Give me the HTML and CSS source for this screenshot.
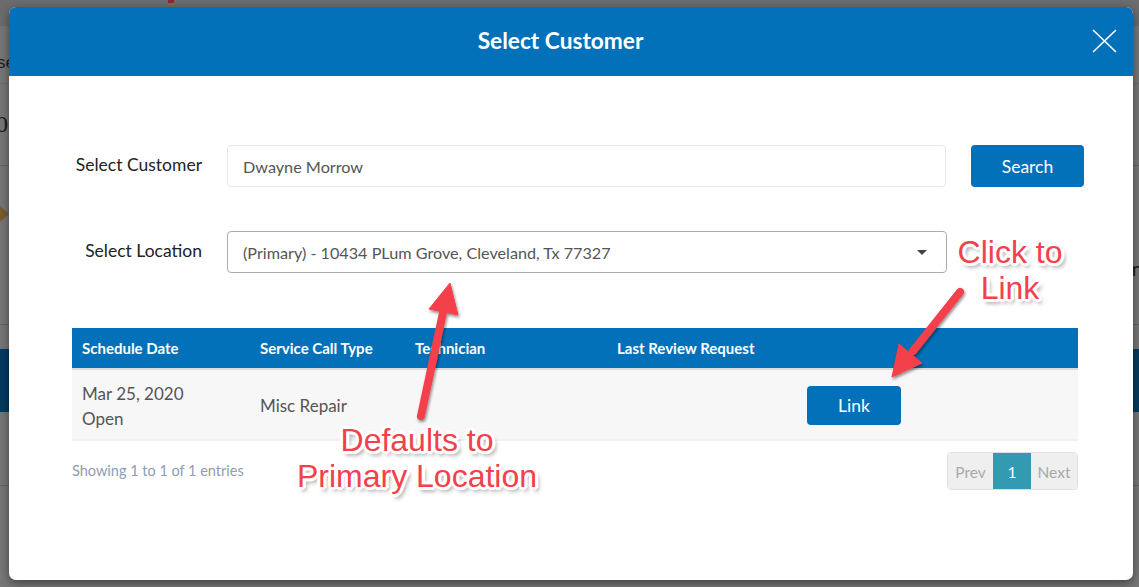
FILE: index.html
```html
<!DOCTYPE html>
<html>
<head>
<meta charset="utf-8">
<title>Select Customer</title>
<link rel="stylesheet" href="styles.css">
</head>
<body>
<div class="page">
  <div class="bg">
    <div class="bg-top"><span class="bg-mark"></span></div>
    <div class="bg-row bg-r1"><span class="bg-text">se</span></div>
    <div class="bg-row bg-r2"><span class="bg-num">0</span></div>
    <div class="bg-row bg-r3"><span class="bg-tri"></span><span class="bg-n">n</span></div>
    <div class="bg-gap"></div>
    <div class="bg-band"></div>
    <div class="bg-row bg-r5"></div>
  </div>

  <div class="modal">
    <div class="modal-header">
      <div class="title">Select Customer</div>
      <svg class="close" width="25" height="24" viewBox="0 0 25 24"><path d="M1 1 L24 23 M24 1 L1 23" stroke="#fff" stroke-width="1.6" fill="none"/></svg>
    </div>
    <div class="modal-body">
      <div class="form">
        <div class="label">Select Customer</div>
        <div class="field input">Dwayne Morrow</div>
        <div class="btn search">Search</div>
        <div class="label">Select Location</div>
        <div class="field select"><span>(Primary) - 10434 PLum Grove, Cleveland, Tx 77327</span><span class="caret"></span></div>
        <div></div>
      </div>

      <table class="grid">
        <colgroup>
          <col style="width:178px"><col style="width:155px"><col style="width:202px"><col style="width:190px"><col>
        </colgroup>
        <thead>
          <tr><th>Schedule Date</th><th>Service Call Type</th><th>Technician</th><th>Last Review Request</th><th></th></tr>
        </thead>
        <tbody>
          <tr>
            <td>Mar 25, 2020<br>Open</td>
            <td>Misc Repair</td>
            <td></td>
            <td></td>
            <td><div class="btn link">Link</div></td>
          </tr>
        </tbody>
      </table>

      <div class="footer">
        <div class="showing">Showing 1 to 1 of 1 entries</div>
        <div class="pager">
          <span class="pg prev">Prev</span><span class="pg cur">1</span><span class="pg next">Next</span>
        </div>
      </div>
    </div>
  </div>

  <svg class="arrows" width="1139" height="587" viewBox="0 0 1139 587">
    <defs>
      <filter id="sh" x="-20%" y="-20%" width="140%" height="140%">
        <feDropShadow dx="1" dy="2" stdDeviation="1.8" flood-color="#000" flood-opacity="0.45"/>
      </filter>
    </defs>
    <g filter="url(#sh)" fill="#f3414b" stroke="#f3414b">
      <line x1="421" y1="416" x2="444" y2="308" stroke-width="8" stroke-linecap="round"/>
      <polygon points="450,283 458,315 429,309" stroke-width="1" stroke-linejoin="round"/>
      <line x1="960" y1="292" x2="913" y2="351" stroke-width="8" stroke-linecap="round"/>
      <polygon points="892,377 922,363 899,344" stroke-width="1" stroke-linejoin="round"/>
    </g>
  </svg>

  <div class="note note-link">Click to<br>Link</div>
  <div class="note note-loc">Defaults to<br>Primary Location</div>
</div>
</body>
</html>
```
FILE: styles.css
```css
html, body {
  margin: 0;
  padding: 0;
}
body {
  font-family: Lato, "Open Sans", "Liberation Sans", sans-serif;
}
.page {
  position: relative;
  width: 1139px;
  height: 587px;
  overflow: hidden;
  background: #767676;
}

/* dimmed page behind the modal */
.bg {
  display: flex;
  flex-direction: column;
}
.bg-top {
  height: 26px;
  background: #6c6c6c;
  padding-left: 168px;
}
.bg-mark {
  display: block;
  width: 6px;
  height: 3px;
  background: #8a2b2b;
}
.bg-row {
  border-bottom: 1px solid #636363;
}
.bg-r1 {
  height: 58px;
  display: flex;
  align-items: flex-end;
  padding-bottom: 10px;
  box-sizing: border-box;
  border-bottom-color: #6e6e6e;
}
.bg-text {
  font-family: "Liberation Sans", sans-serif;
  font-size: 17px;
  color: #1d1d1d;
  margin-left: -3px;
}
.bg-r2 {
  height: 81px;
  display: flex;
  align-items: center;
}
.bg-num {
  font-family: "Liberation Serif", serif;
  font-size: 24px;
  color: #1b1b1b;
  margin-left: -4px;
}
.bg-r3 {
  height: 158px;
  display: flex;
  justify-content: space-between;
  align-items: flex-start;
}
.bg-tri {
  margin-top: 40px;
  width: 0;
  height: 0;
  border-top: 8px solid transparent;
  border-bottom: 8px solid transparent;
  border-right: 0;
  border-left: 9px solid #7a5a2e;
}
.bg-n {
  margin-top: 90px;
  margin-right: -4px;
  font-size: 20px;
  color: #1b1b1b;
}
.bg-gap {
  height: 24px;
}
.bg-band {
  height: 63px;
  background: #053a5f;
}
.bg-r5 {
  height: 73px;
}

/* modal */
.modal {
  position: absolute;
  left: 9px;
  top: 7px;
  width: 1124px;
  height: 573px;
  background: #fff;
  border-radius: 7px;
  box-shadow: 0 3px 10px rgba(0, 0, 0, 0.45);
  overflow: hidden;
  display: flex;
  flex-direction: column;
}
.modal-header {
  height: 69px;
  flex: none;
  background: #0271b9;
  display: flex;
  align-items: center;
  padding: 0 16px 0 20px;
}
.title {
  flex: 1;
  text-align: center;
  color: #fff;
  font-weight: 700;
  font-size: 22.7px;
  margin-top: -2px;
}
.close {
  display: block;
  margin-top: -2px;
}
.modal-body {
  padding: 69px 49px 0 63px;
}
.form {
  display: grid;
  grid-template-columns: 130px 719px 113px;
  column-gap: 25px;
  row-gap: 44px;
  align-items: center;
}
.label {
  text-align: right;
  font-size: 17.5px;
  color: #222;
  margin-top: -3px;
}
.field {
  height: 42px;
  box-sizing: border-box;
  border-radius: 4px;
  padding: 0 15px;
  display: flex;
  align-items: center;
  font-size: 16.2px;
  color: #555;
}
.input {
  border: 1px solid #e6e6e6;
}
.select {
  border: 1px solid #ababab;
  justify-content: space-between;
  width: 720px;
}
.caret {
  width: 0;
  height: 0;
  border-left: 5px solid transparent;
  border-right: 5px solid transparent;
  border-top: 5px solid #444;
  margin-right: 4px;
}
.btn {
  background: #0271b9;
  color: #fff;
  border-radius: 4px;
  display: flex;
  align-items: center;
  justify-content: center;
  font-size: 17.5px;
}
.search {
  height: 42px;
}

/* table */
.grid {
  margin-top: 55px;
  width: 1006px;
  border-collapse: collapse;
  table-layout: fixed;
}
.grid th {
  height: 40px;
  padding: 0 10px;
  background: #0271b9;
  color: #fff;
  font-weight: 700;
  font-size: 15px;
  text-align: left;
  border-bottom: 2px solid #dcdcdc;
  white-space: nowrap;
}
.grid td {
  height: 71px;
  box-sizing: border-box;
  padding: 2px 10px 0;
  background: #f7f7f7;
  color: #555;
  font-size: 17px;
  line-height: 25px;
  border-bottom: 2px solid #eef1f5;
  vertical-align: middle;
}
.link {
  width: 94px;
  height: 39px;
}

.footer {
  margin-top: 11px;
  width: 1006px;
  display: flex;
  justify-content: space-between;
  align-items: flex-start;
}
.showing {
  font-size: 14.5px;
  color: #8d9db2;
  margin-top: 10px;
}
.pager {
  display: flex;
  height: 38px;
  border: 1px solid #e0e0e0;
  border-radius: 4px;
  overflow: hidden;
  box-sizing: border-box;
}
.pg {
  display: flex;
  align-items: center;
  justify-content: center;
  font-size: 15.5px;
  background: #efefef;
  color: #a9a9a9;
  padding-top: 1px;
}
.prev { width: 45px; }
.cur { width: 38px; background: #329bb2; color: #fff; }
.next { width: 46px; }

/* annotations */
.arrows {
  position: absolute;
  left: 0;
  top: 0;
  pointer-events: none;
}
.note {
  position: absolute;
  font-family: "Liberation Sans", Arial, sans-serif;
  font-size: 32px;
  line-height: 36px;
  color: #f3414b;
  text-align: center;
  white-space: nowrap;
  text-shadow:
    2px 0 0 #fff, -2px 0 0 #fff, 0 2px 0 #fff, 0 -2px 0 #fff,
    2px 2px 0 #fff, -2px -2px 0 #fff, 2px -2px 0 #fff, -2px 2px 0 #fff,
    3px 0 0 #fff, -3px 0 0 #fff, 0 3px 0 #fff, 0 -3px 0 #fff,
    3px 1px 0 #fff, 1px 3px 0 #fff, -3px -1px 0 #fff, -1px -3px 0 #fff,
    3px 4px 4px rgba(0, 0, 0, 0.5);
}
.note-link {
  left: 940px;
  top: 234px;
  width: 140px;
}
.note-loc {
  left: 277px;
  top: 422px;
  width: 280px;
}
```
